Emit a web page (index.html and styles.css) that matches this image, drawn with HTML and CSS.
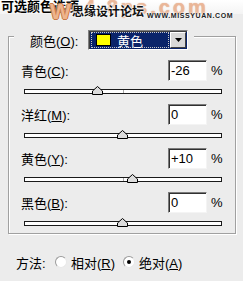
FILE: index.html
```html
<!DOCTYPE html>
<html lang="zh">
<head>
    <meta charset="UTF-8">
    <title>可选颜色选项</title>
    <link rel="stylesheet" href="styles.css">
</head>
<body>
  <div class="titlebar"><span class="title">可选颜色选项</span></div>

  <!-- watermark laid over the title area -->
  <div class="watermark">
    <span class="wm-site">4 8ps.com</span>
    <span class="wm-w">W</span>
    <span class="wm-cn">思缘设计论坛</span>
    <span class="wm-url">WWW.MISSYUAN.COM</span>
  </div>

  <div class="dialog">
    <div class="group">
      <div class="group-head">
        <span class="lbl">颜色(<u>O</u>):</span>
        <div class="combo">
          <div class="combo-value"><span class="swatch"></span>黄色</div>
          <div class="combo-btn">
            <svg width="7" height="4" viewBox="0 0 7 4"><path d="M0 0h7L3.5 4z" fill="#000"/></svg>
          </div>
        </div>
      </div>

      <div class="row">
        <span class="lbl">青色(<u>C</u>):</span>
        <div class="field">-26</div>
        <span class="pct">%</span>
      </div>
      <div class="slider"><div class="track"><span class="thumb" style="left: 37%"></span></div></div>

      <div class="row">
        <span class="lbl">洋红(<u>M</u>):</span>
        <div class="field">0</div>
        <span class="pct">%</span>
      </div>
      <div class="slider"><div class="track"><span class="thumb" style="left: 50%"></span></div></div>

      <div class="row">
        <span class="lbl">黄色(<u>Y</u>):</span>
        <div class="field">+10</div>
        <span class="pct">%</span>
      </div>
      <div class="slider"><div class="track"><span class="thumb" style="left: 55%"></span></div></div>

      <div class="row">
        <span class="lbl">黑色(<u>B</u>):</span>
        <div class="field">0</div>
        <span class="pct">%</span>
      </div>
      <div class="slider"><div class="track"><span class="thumb" style="left: 50%"></span></div></div>
    </div>

    <div class="method">
      <span class="method-lbl">方法:</span>
      <span class="radio"></span>
      <span class="radio-lbl">相对(<u>R</u>)</span>
      <span class="radio checked"></span>
      <span class="radio-lbl">绝对(<u>A</u>)</span>
    </div>
  </div>
</body>
</html>
```

FILE: styles.css
```css
body {
  margin: 0;
  width: 243px;
  height: 281px;
  overflow: hidden;
  position: relative;
  background-color: #ececec;
  color: #000;
  font-family: "Liberation Sans", "Noto Sans CJK SC", sans-serif;
  font-size: 13px;
}

u {
  text-decoration: underline;
  text-underline-offset: 1px;
}

.titlebar {
  height: 14px;
  background: linear-gradient(#ffffff, #f4f4f4);
  overflow: hidden;
}

.title {
  display: block;
  font-weight: bold;
  font-size: 13px;
  line-height: 13px;
  padding-left: 1px;
}

/* watermark */
.watermark {
  position: absolute;
  top: 0;
  left: 0;
  width: 243px;
  height: 24px;
  overflow: hidden;
  pointer-events: none;
}

.wm-site {
  position: absolute;
  left: 84px;
  top: 0;
  font-family: "Liberation Sans", sans-serif;
  font-weight: bold;
  font-size: 20px;
  line-height: 15px;
  letter-spacing: 3px;
  color: rgba(240, 190, 160, 0.8);
  text-shadow: 0 0 1px rgba(205, 125, 85, 0.8);
}

.wm-w {
  position: absolute;
  left: 50px;
  top: 1px;
  font-family: "Liberation Sans", sans-serif;
  font-weight: bold;
  font-size: 22px;
  line-height: 22px;
  color: #eeb48c;
  text-shadow: 1px 0 #c87a46, -1px 0 #c87a46, 0 1px #c87a46, 0 -1px #c87a46, 0 0 3px #fff;
}

.wm-cn {
  position: absolute;
  left: 72px;
  top: 6px;
  font-size: 12px;
  line-height: 13px;
  font-weight: bold;
  color: #111;
  text-shadow: 0 0 2px #fff, 0 0 2px #fff, 0 0 3px #fff;
}

.wm-url {
  position: absolute;
  left: 147px;
  top: 12px;
  font-family: "Liberation Sans", sans-serif;
  font-size: 7px;
  line-height: 7px;
  font-weight: bold;
  letter-spacing: 0.6px;
  color: #222;
  text-shadow: 0 0 2px #fff, 0 0 2px #fff;
}

/* group box */
.dialog {
  padding-top: 22px;
}

.group {
  box-sizing: border-box;
  width: 228px;
  height: 198px;
  margin-left: 8px;
  padding: 0 13px 0 12px;
  border: 1px solid #a0a0a0;
  box-shadow: inset 1px 1px 0 #fff, 1px 1px 0 #fff;
}

.group-head {
  display: flex;
  align-items: center;
  width: fit-content;
  height: 20px;
  margin: -7px 0 0 -7px;
  padding: 0 6px 0 16px;
  background-color: #ececec;
}

.group-head .lbl {
  width: 58px;
}

.combo {
  box-sizing: border-box;
  display: flex;
  align-items: center;
  width: 100px;
  height: 20px;
  padding: 1px;
  border: 1px solid;
  border-color: #808080 #fff #fff #808080;
  box-shadow: inset 1px 1px 0 #404040;
  background-color: #0a246a;
}

.combo-value {
  box-sizing: border-box;
  flex: 1;
  display: flex;
  align-items: center;
  height: 16px;
  margin-left: 1px;
  padding-left: 4px;
  border: 1px dotted #c8c8c8;
  color: #fff;
  font-size: 13px;
}

.swatch {
  box-sizing: border-box;
  width: 15px;
  height: 12px;
  margin-right: 6px;
  border: 1px solid #000;
  background-color: #ffff00;
}

.combo-btn {
  box-sizing: border-box;
  display: flex;
  align-items: center;
  justify-content: center;
  width: 16px;
  height: 16px;
  margin-left: 1px;
  border: 1px solid;
  border-color: #fff #404040 #404040 #fff;
  background-color: #d8d8d8;
}

/* rows */
.row {
  display: flex;
  align-items: center;
  height: 21px;
  margin-top: 10px;
}

.slider + .row {
  margin-top: 0;
}

.row .lbl {
  flex: 1;
}

.field {
  box-sizing: border-box;
  width: 39px;
  height: 21px;
  padding: 2px 0 0 2px;
  border: 1px solid;
  border-color: #7a7a7a #f4f4f4 #f4f4f4 #7a7a7a;
  box-shadow: inset 1px 1px 0 #303030;
  background-color: #fff;
  font-family: "Liberation Sans", sans-serif;
  font-size: 13px;
  line-height: 16px;
}

.pct {
  width: 11px;
  margin-left: 4px;
  font-family: "Liberation Sans", sans-serif;
  font-size: 13px;
}

.slider {
  box-sizing: border-box;
  height: 23px;
  padding: 8px 0 0 3px;
}

.track {
  box-sizing: border-box;
  position: relative;
  width: 198px;
  height: 5px;
  border: 1px solid #1a1a1a;
  background-color: #fff;
}

.track::after {
  content: '';
  position: absolute;
  left: 50%;
  top: 0;
  width: 1px;
  height: 3px;
  background-color: #a8a8a8;
}

.thumb {
  position: absolute;
  top: -4px;
  width: 11px;
  height: 9px;
  margin-left: -6px;
  z-index: 1;
  background: url("data:image/svg+xml,%3Csvg xmlns='http://www.w3.org/2000/svg' width='11' height='9'%3E%3Cpath d='M5.5 0.5L10.5 5V8.5H0.5V5Z' fill='%23dcdcdc' stroke='%23000'/%3E%3C/svg%3E") no-repeat;
}

/* method */
.method {
  display: flex;
  align-items: center;
  height: 14px;
  margin-top: 21px;
  padding-left: 16px;
}

.method-lbl {
  width: 39px;
}

.radio {
  box-sizing: border-box;
  position: relative;
  width: 12px;
  height: 12px;
  margin-right: 4px;
  border: 1px solid;
  border-color: #9a9a9a #e8e8e8 #e8e8e8 #9a9a9a;
  border-radius: 50%;
  background-color: #fff;
}

.radio.checked::after {
  content: '';
  position: absolute;
  left: 3px;
  top: 3px;
  width: 4px;
  height: 4px;
  border-radius: 50%;
  background-color: #000;
}

.radio-lbl {
  width: 52px;
}
```
